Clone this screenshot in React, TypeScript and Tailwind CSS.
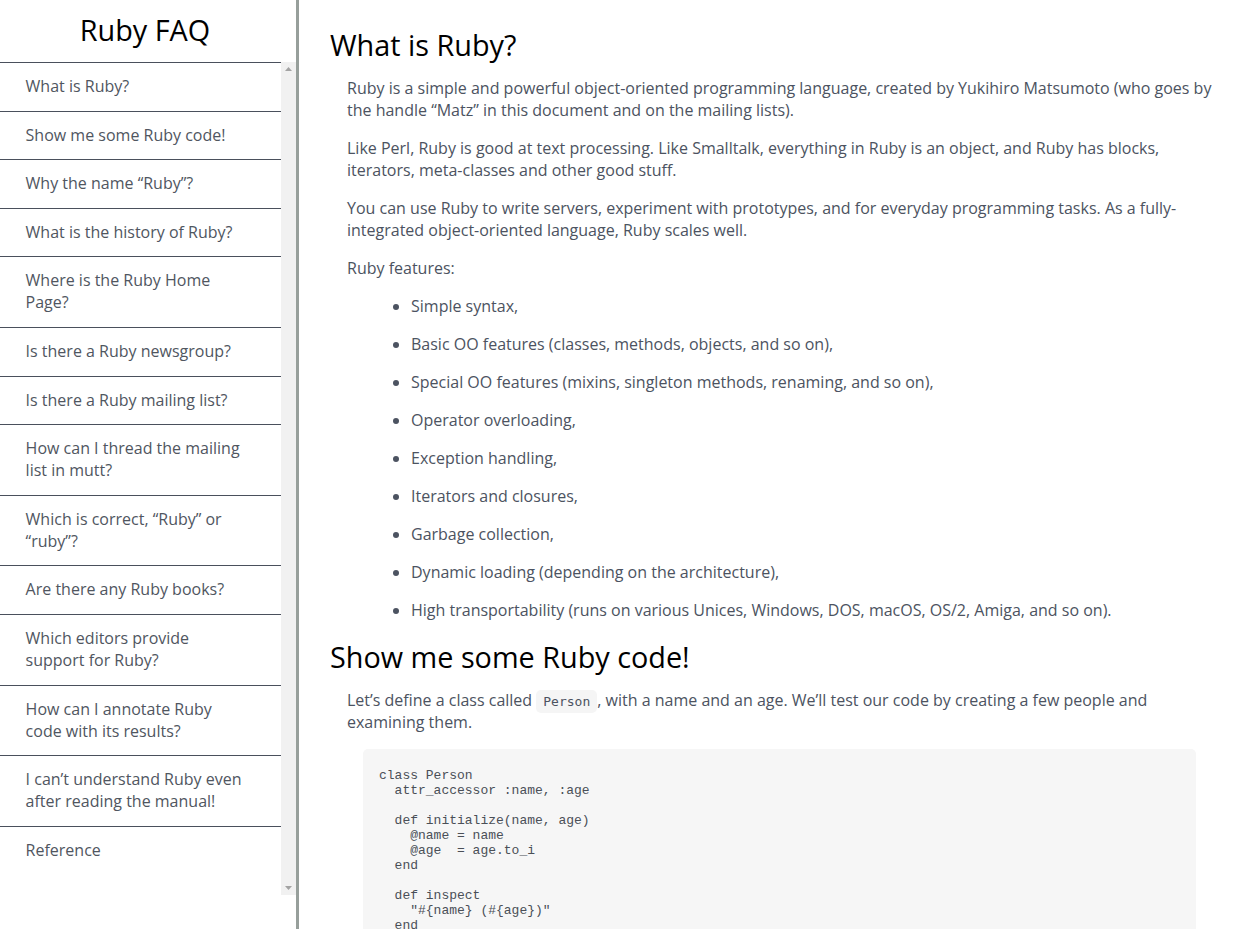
const questions = [
  "What is Ruby?",
  "Show me some Ruby code!",
  "Why the name \u201cRuby\u201d?",
  "What is the history of Ruby?",
  "Where is the Ruby Home Page?",
  "Is there a Ruby newsgroup?",
  "Is there a Ruby mailing list?",
  "How can I thread the mailing list in mutt?",
  "Which is correct, \u201cRuby\u201d or \u201cruby\u201d?",
  "Are there any Ruby books?",
  "Which editors provide support for Ruby?",
  "How can I annotate Ruby code with its results?",
  "I can\u2019t understand Ruby even after reading the manual!",
  "Reference",
];

const features = [
  "Simple syntax,",
  "Basic OO features (classes, methods, objects, and so on),",
  "Special OO features (mixins, singleton methods, renaming, and so on),",
  "Operator overloading,",
  "Exception handling,",
  "Iterators and closures,",
  "Garbage collection,",
  "Dynamic loading (depending on the architecture),",
  "High transportability (runs on various Unices, Windows, DOS, macOS, OS/2, Amiga, and so on).",
];

const code = `class Person
  attr_accessor :name, :age

  def initialize(name, age)
    @name = name
    @age  = age.to_i
  end

  def inspect
    "#{name} (#{age})"
  end
end

p1 = Person.new('elmo', 4)
p2 = Person.new('zoe', 7)`;

// classic scrollbar track, no thumb (list fits)
function Track() {
  return (
    <div className="w-[15px] shrink-0 bg-[#f1f1f1] flex flex-col items-center justify-between py-[5px]">
      <svg width="7" height="4" viewBox="0 0 7 4">
        <path d="M3.5 0 L7 4 L0 4 Z" fill="#a3a3a3" />
      </svg>
      <svg width="7" height="4" viewBox="0 0 7 4">
        <path d="M0 0 L7 0 L3.5 4 Z" fill="#a3a3a3" />
      </svg>
    </div>
  );
}

export default function App() {
  return (
    <div className="flex h-[929px] overflow-hidden bg-white font-['Open_Sans',sans-serif] text-[16px] leading-[22px]">
      {/* sidebar */}
      <aside className="w-[299px] shrink-0 border-r-[3px] border-[#979f9b] flex flex-col">
        <div className="h-[62px] flex items-center justify-center pr-[6px] pb-[2px]">
          <h1 className="text-[28.8px] leading-[40px] text-black">Ruby FAQ</h1>
        </div>
        <nav className="h-[833px] flex">
          <ul className="w-[281px] shrink-0">
            {questions.map((q) => (
              <li
                key={q}
                className="border-t border-[#4a505c] pl-[25.6px] pr-[35px] pt-[12px] pb-[13.6px] text-[#50565f]"
              >
                {q}
              </li>
            ))}
          </ul>
          <Track />
        </nav>
      </aside>

      {/* main content */}
      <main className="flex-1 overflow-hidden pl-[31px] pr-[36px] pt-[23px]">
        <h2 className="text-[28.8px] leading-[44px] text-black">What is Ruby?</h2>
        <div className="ml-[17px] mt-[10px] text-[#4c5361]">
          <p>
            Ruby is a simple and powerful object-oriented programming language, created by Yukihiro
            Matsumoto (who goes by the handle &ldquo;Matz&rdquo; in this document and on the mailing lists).
          </p>
          <p className="mt-4">
            Like Perl, Ruby is good at text processing. Like Smalltalk, everything in Ruby is an
            object, and Ruby has blocks, iterators, meta-classes and other good stuff.
          </p>
          <p className="mt-4">
            You can use Ruby to write servers, experiment with prototypes, and for everyday
            programming tasks. As a fully-integrated object-oriented language, Ruby scales well.
          </p>
          <p className="mt-4">Ruby features:</p>
          <ul className="mt-4 pl-[64px] list-disc">
            {features.map((f) => (
              <li key={f} className="mb-4 marker:text-[#4c5361]">
                {f}
              </li>
            ))}
          </ul>
        </div>

        <h2 className="text-[28.8px] leading-[44px] text-black mt-[-2px]">Show me some Ruby code!</h2>
        <div className="ml-[17px] mt-[10px] text-[#4c5361]">
          <p>
            Let&rsquo;s define a class called{" "}
            <code className="bg-[#f5f5f5] rounded-[5px] px-[7px] py-[4px] font-['DejaVu_Sans_Mono',monospace] text-[13px] leading-[14px] text-[#4c5361]">
              Person
            </code>
            , with a name and an age. We&rsquo;ll test our code by creating a few people and
            examining them.
          </p>
          <pre className="mx-4 mt-[16px] bg-[#f6f6f6] rounded-[5px] px-4 pt-[19px] pb-4 font-['Liberation_Mono',monospace] text-[13px] leading-[15px] text-[#4a4f57]">
            {code}
          </pre>
        </div>
      </main>
    </div>
  );
}
